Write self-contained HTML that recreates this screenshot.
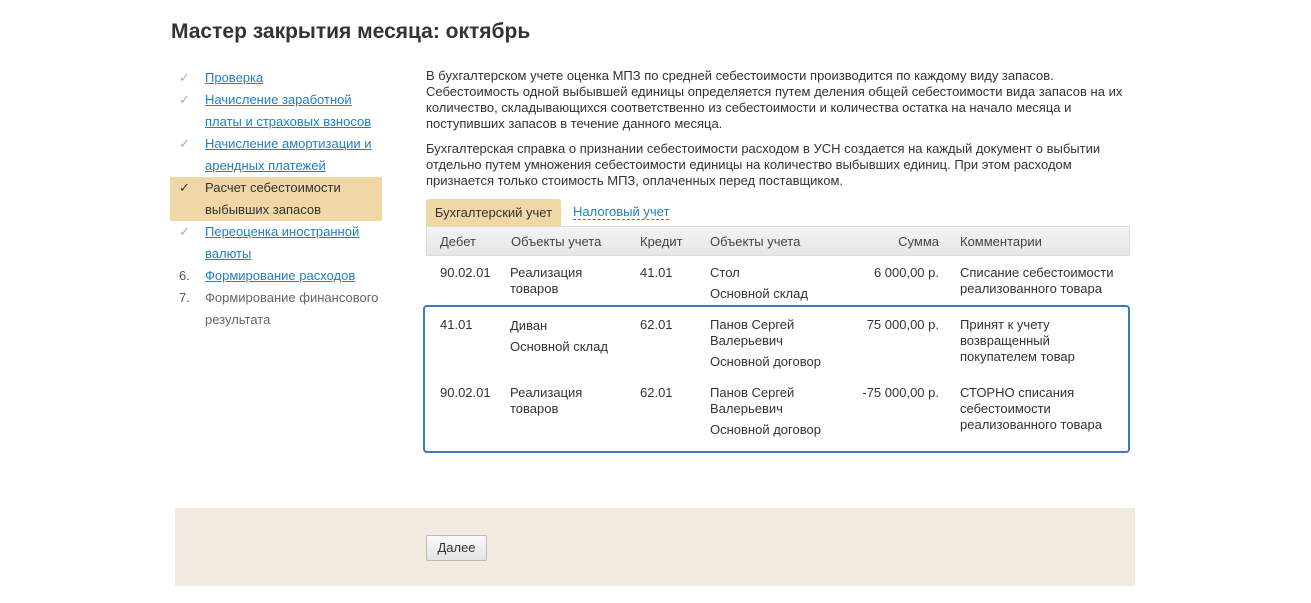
<!DOCTYPE html>
<html><head><meta charset="utf-8"><style>
*{margin:0;padding:0;box-sizing:border-box}
body{width:1311px;height:603px;background:#fff;font-family:"Liberation Sans",Arial,sans-serif;font-size:13px;color:#333;position:relative;overflow:hidden}
.a{position:absolute;white-space:nowrap}
h1{position:absolute;left:171px;top:20px;font-size:21px;font-weight:bold;color:#333}
a{color:#1f7fc4;text-decoration:underline}
.nav{position:absolute;left:170px;top:67px;width:212px}
.nav div{position:relative;padding-left:35px;line-height:22px}
.nav .m{position:absolute;left:9px;top:0;color:#aaa}
.nav .cur{background:#f1d7a6}
.nav .cur .m{color:#333}
.p{position:absolute;left:426px;line-height:16px;white-space:nowrap}
.hdr{position:absolute;left:426px;top:226px;width:704px;height:30px;background:linear-gradient(#f4f4f4,#e6e6e6);border:1px solid #ddd}
.box{position:absolute;left:423px;top:305px;width:707px;height:148px;border:2px solid #3a7bc0;border-radius:4px}
.r{text-align:right}
</style></head><body>
<h1>Мастер закрытия месяца: октябрь</h1>
<div class="nav">
<div><span class="m">✓</span><a>Проверка</a></div>
<div><span class="m">✓</span><a>Начисление заработной<br>платы и страховых взносов</a></div>
<div><span class="m">✓</span><a>Начисление амортизации и<br>арендных платежей</a></div>
<div class="cur"><span class="m">✓</span>Расчет себестоимости<br>выбывших запасов</div>
<div><span class="m">✓</span><a>Переоценка иностранной<br>валюты</a></div>
<div><span class="m" style="color:#555">6.</span><a>Формирование расходов</a></div>
<div style="color:#666"><span class="m" style="color:#555">7.</span>Формирование финансового<br>результата</div>
</div>
<div class="p" style="top:68px">В бухгалтерском учете оценка МПЗ по средней себестоимости производится по каждому виду запасов.<br>Себестоимость одной выбывшей единицы определяется путем деления общей себестоимости вида запасов на их<br>количество, складывающихся соответственно из себестоимости и количества остатка на начало месяца и<br>поступивших запасов в течение данного месяца.</div>
<div class="p" style="top:141px">Бухгалтерская справка о признании себестоимости расходом в УСН создается на каждый документ о выбытии<br>отдельно путем умножения себестоимости единицы на количество выбывших единиц. При этом расходом<br>признается только стоимость МПЗ, оплаченных перед поставщиком.</div>
<div class="a" style="left:426px;top:199px;width:135px;height:27px;background:#f1d7a6;border-radius:3px 3px 0 0;line-height:27px;text-align:center">Бухгалтерский учет</div>
<div class="a" style="left:573px;top:204px;color:#1f7fc4;border-bottom:1px dashed #1f7fc4;line-height:15px">Налоговый учет</div>
<div class="hdr"></div>
<div class="a" style="left:440px;top:234px;color:#444">Дебет</div>
<div class="a" style="left:511px;top:234px;color:#444">Объекты учета</div>
<div class="a" style="left:640px;top:234px;color:#444">Кредит</div>
<div class="a" style="left:710px;top:234px;color:#444">Объекты учета</div>
<div class="a r" style="left:840px;width:99px;top:234px;color:#444">Сумма</div>
<div class="a" style="left:960px;top:234px;color:#444">Комментарии</div>

<div class="p" style="left:440px;top:265px">90.02.01</div>
<div class="p" style="left:510px;top:265px">Реализация<br>товаров</div>
<div class="p" style="left:640px;top:265px">41.01</div>
<div class="p" style="left:710px;top:265px;line-height:21px;top:262px">Стол<br>Основной склад</div>
<div class="p r" style="left:840px;width:99px;top:265px">6 000,00 р.</div>
<div class="p" style="left:960px;top:265px">Списание себестоимости<br>реализованного товара</div>

<div class="box"></div>
<div class="p" style="left:440px;top:317px">41.01</div>
<div class="p" style="left:510px;top:317px;line-height:21px;top:315px">Диван<br>Основной склад</div>
<div class="p" style="left:640px;top:317px">62.01</div>
<div class="p" style="left:710px;top:317px">Панов Сергей<br>Валерьевич</div>
<div class="p" style="left:710px;top:354px">Основной договор</div>
<div class="p r" style="left:840px;width:99px;top:317px">75 000,00 р.</div>
<div class="p" style="left:960px;top:317px">Принят к учету<br>возвращенный<br>покупателем товар</div>

<div class="p" style="left:440px;top:385px">90.02.01</div>
<div class="p" style="left:510px;top:385px">Реализация<br>товаров</div>
<div class="p" style="left:640px;top:385px">62.01</div>
<div class="p" style="left:710px;top:385px">Панов Сергей<br>Валерьевич</div>
<div class="p" style="left:710px;top:422px">Основной договор</div>
<div class="p r" style="left:840px;width:99px;top:385px">-75 000,00 р.</div>
<div class="p" style="left:960px;top:385px">СТОРНО списания<br>себестоимости<br>реализованного товара</div>

<div class="a" style="left:175px;top:508px;width:960px;height:78px;background:#f3ebdf"></div>
<div class="a" style="left:426px;top:535px;width:61px;height:26px;border:1px solid #bbb;border-radius:2px;background:linear-gradient(#fafafa,#e4e4e4);text-align:center;line-height:24px">Далее</div>
</body></html>
